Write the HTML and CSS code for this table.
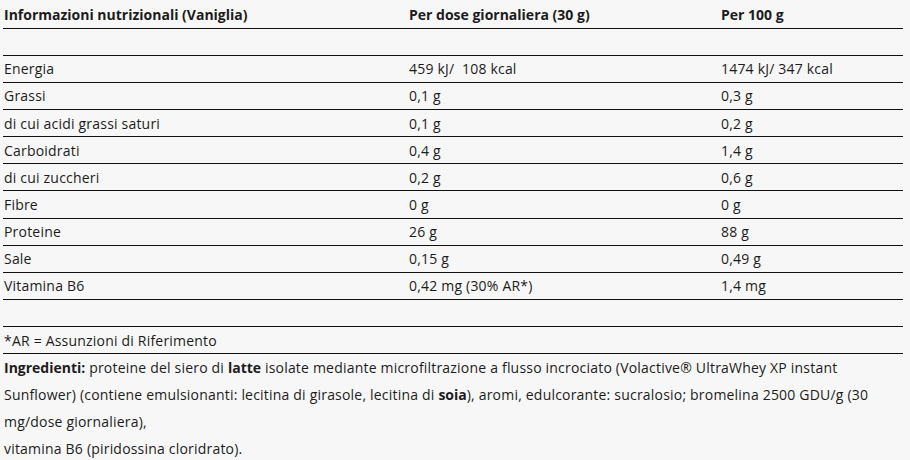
FILE: index.html
```html
<!DOCTYPE html>
<html lang="it">
<head>
<meta charset="utf-8">
<title>Informazioni nutrizionali</title>
<link rel="stylesheet" href="styles.css">
</head>
<body>
<div class="wrap">
  <table class="nutri">
    <colgroup>
      <col class="c1"><col class="c2"><col class="c3">
    </colgroup>
    <thead>
      <tr class="head">
        <th>Informazioni nutrizionali (Vaniglia)</th>
        <th>Per dose giornaliera (30 g)</th>
        <th>Per 100 g</th>
      </tr>
    </thead>
    <tbody>
      <tr><td></td><td></td><td></td></tr>
      <tr><td>Energia</td><td>459 kJ/&nbsp; 108 kcal</td><td>1474 kJ/ 347 kcal</td></tr>
      <tr><td>Grassi</td><td>0,1 g</td><td>0,3 g</td></tr>
      <tr><td>di cui acidi grassi saturi</td><td>0,1 g</td><td>0,2 g</td></tr>
      <tr><td>Carboidrati</td><td>0,4 g</td><td>1,4 g</td></tr>
      <tr><td>di cui zuccheri</td><td>0,2 g</td><td>0,6 g</td></tr>
      <tr><td>Fibre</td><td>0 g</td><td>0 g</td></tr>
      <tr><td>Proteine</td><td>26 g</td><td>88 g</td></tr>
      <tr><td>Sale</td><td>0,15 g</td><td>0,49 g</td></tr>
      <tr><td>Vitamina B6</td><td>0,42 mg (30% AR*)</td><td>1,4 mg</td></tr>
      <tr><td></td><td></td><td></td></tr>
      <tr><td colspan="3">*AR = Assunzioni di Riferimento</td></tr>
    </tbody>
  </table>
  <p class="ingr"><b>Ingredienti:</b> proteine del siero di <b>latte</b> isolate mediante microfiltrazione a flusso incrociato (Volactive® UltraWhey XP instant<br>Sunflower) (contiene emulsionanti: lecitina di girasole, lecitina di <b>soia</b>), aromi, edulcorante: sucralosio; bromelina 2500 GDU/g (30<br>mg/dose giornaliera),<br>vitamina B6 (piridossina cloridrato).</p>
</div>
</body>
</html>
```
FILE: styles.css
```css
html, body {
  margin: 0;
  padding: 0;
  background: #f7f7f7;
}
body {
  font-family: "Open Sans", "Liberation Sans", sans-serif;
  font-size: 14px;
  color: #1c1c1c;
  letter-spacing: 0.2px;
}
.wrap {
  width: 900px;
  padding-left: 3px;
}
.nutri {
  width: 900px;
  border-collapse: collapse;
  table-layout: fixed;
}
.c1 { width: 405px; }
.c2 { width: 312px; }
.c3 { width: 183px; }
.nutri th,
.nutri td {
  padding: 0 0 0 1px;
  text-align: left;
  vertical-align: middle;
  border-bottom: 1px solid #111;
  height: 26.17px;
  white-space: nowrap;
}
.nutri th {
  font-weight: 700;
  letter-spacing: 0;
  height: 28px;
  padding-top: 2px;
  box-sizing: border-box;
}
.ingr {
  margin: 0;
  padding-left: 1px;
  line-height: 27px;
  white-space: nowrap;
}
.ingr b { font-weight: 700; letter-spacing: 0; }
```
